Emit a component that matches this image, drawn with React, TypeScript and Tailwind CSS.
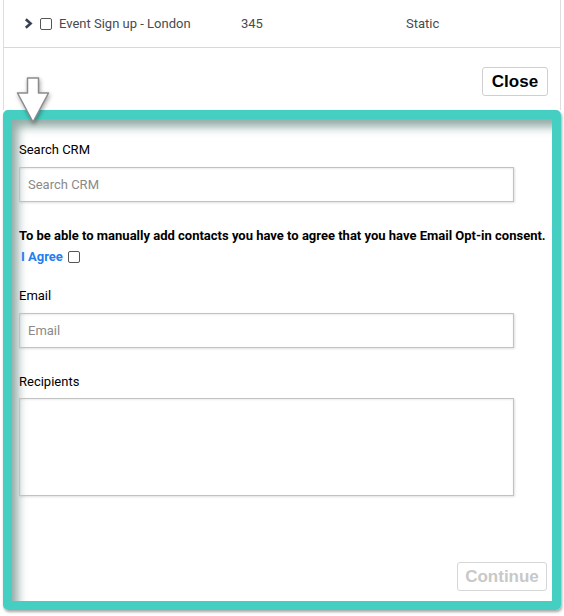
import React from "react";

export default function App() {
  return (
    <div className="relative w-[564px] h-[616px] overflow-hidden bg-white font-['Roboto',sans-serif]">
      <div className="mx-[3px] h-[110px] border-x border-[#dedede]">
        <div className="flex h-[48px] items-center border-b border-[#d8d8d8] pl-[20px] text-[13px] text-[#4a4a4a]">
          <svg width="9" height="11" viewBox="0 0 9 11" className="mr-[7px]">
            <path d="M1.8 1.2 L6.6 5.5 L1.8 9.8" fill="none" stroke="#3a4252" strokeWidth="2.6" strokeLinejoin="miter" />
          </svg>
          <span className="mr-[7px] h-[12px] w-[12px] rounded-[2px] border border-[#555]" />
          <span className="w-[182px]">Event Sign up - London</span>
          <span className="w-[165px]">345</span>
          <span>Static</span>
        </div>
        <div className="flex justify-end pr-[12px] pt-[19px]">
          <button className="h-[29px] w-[66px] rounded-[3px] border border-[#cfcfcf] bg-white font-['Liberation_Sans',Arial,sans-serif] text-[17px] font-bold text-black">
            Close
          </button>
        </div>
      </div>

      <div className="ml-[3px] h-[500px] w-[558px] rounded-[5px] border-[9px] border-[#45cfc3] shadow-[1px_2px_3px_rgba(0,0,0,0.35)]">
        <div className="flex h-full flex-col pl-[7px] pr-[5px] pt-[23px] shadow-[inset_9px_11px_10px_-3px_rgba(40,90,80,0.5)]">
          <label className="text-[13px] leading-[16px] text-black">Search CRM</label>
          <div className="mt-[9px] flex h-[35px] w-[495px] items-center border border-[#c2c2c2] pl-[8px] text-[13px] text-[#8a8a8a] shadow-[inset_0_1px_2px_rgba(0,0,0,0.08),1px_1px_2px_rgba(0,0,0,0.12)]">
            Search CRM
          </div>
          <p className="mt-[26px] text-[13px] font-bold leading-[16px] text-black">
            To be able to manually add contacts you have to agree that you have Email Opt-in consent.
          </p>
          <div className="mt-[5px] flex items-center pl-[2px] text-[13px] leading-[16px]">
            <span className="font-bold text-[#1f7ff0]">I Agree</span>
            <span className="ml-[5px] h-[12px] w-[12px] rounded-[2px] border border-[#555]" />
          </div>
          <label className="mt-[23px] text-[13px] leading-[16px] text-black">Email</label>
          <div className="mt-[9px] flex h-[35px] w-[495px] items-center border border-[#c2c2c2] pl-[8px] text-[13px] text-[#8a8a8a] shadow-[inset_0_1px_2px_rgba(0,0,0,0.08),1px_1px_2px_rgba(0,0,0,0.12)]">
            Email
          </div>
          <label className="mt-[26px] text-[13px] leading-[16px] text-black">Recipients</label>
          <div className="mt-[8px] h-[98px] w-[495px] border border-[#c2c2c2] shadow-[inset_0_1px_2px_rgba(0,0,0,0.08),1px_1px_2px_rgba(0,0,0,0.12)]" />
          <div className="mt-[66px] flex justify-end">
            <button className="h-[29px] w-[90px] rounded-[3px] border border-[#d6d6d6] bg-white font-['Liberation_Sans',Arial,sans-serif] text-[17px] font-bold text-[#c8c8c8]">
              Continue
            </button>
          </div>
        </div>
      </div>

      <svg className="absolute left-[15px] top-[76px]" width="36" height="50" viewBox="0 0 36 50" style={{ filter: "drop-shadow(1px 2px 2px rgba(0,0,0,0.35))" }}>
        <path d="M12.5 2 H23.5 V17 H33.5 L18 46 L2.5 17 H12.5 Z" fill="white" stroke="#8c8c8c" strokeWidth="1.5" strokeLinejoin="round" />
      </svg>
    </div>
  );
}
